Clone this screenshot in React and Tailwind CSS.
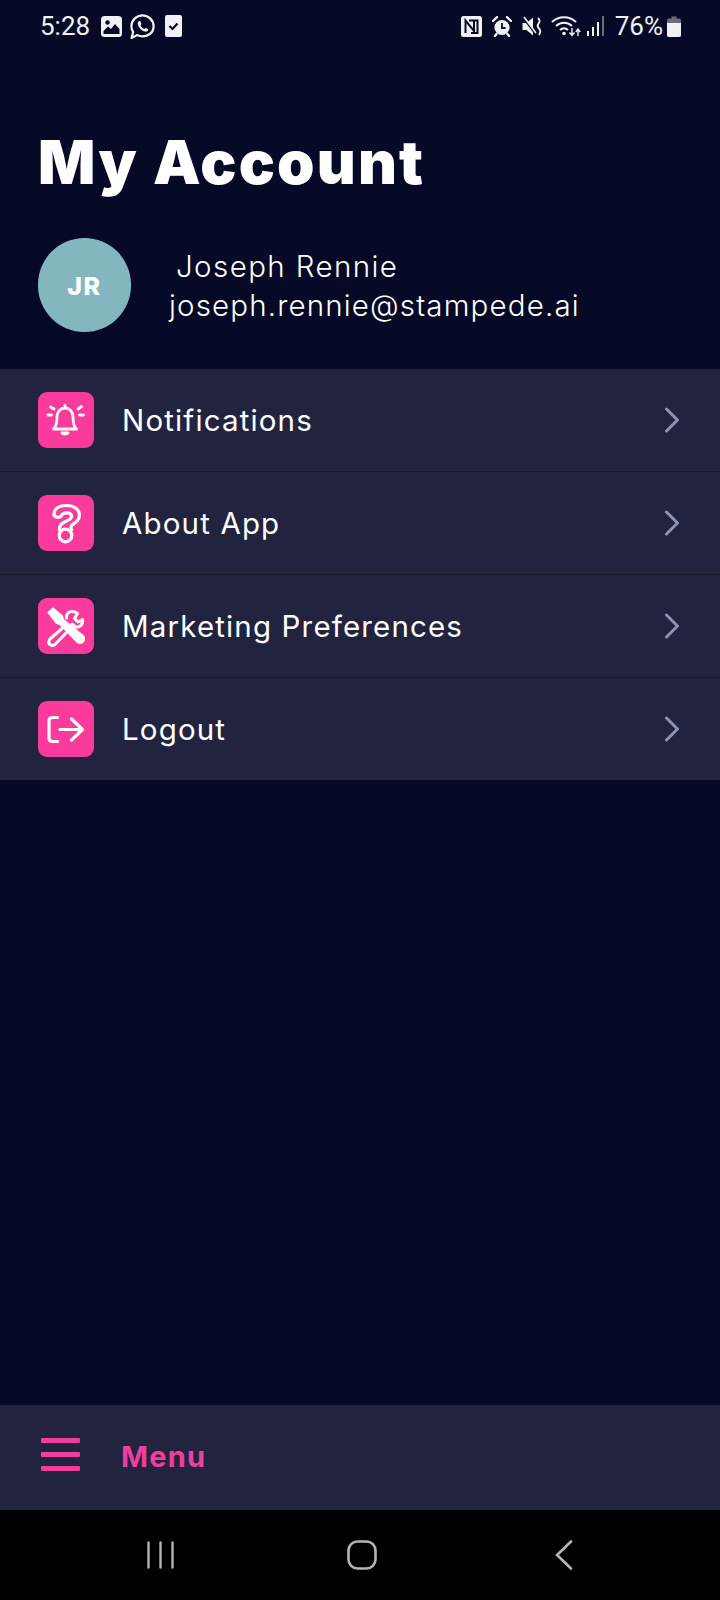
import React from 'react';

const BellIcon = () => (
  <svg width="56" height="56" viewBox="0 0 56 56" fill="none" stroke="white" strokeWidth="2.8" strokeLinecap="round" strokeLinejoin="round">
    <path d="M15.5 37 C18.5 34.5 19 31 19 25 C19 19.5 22.5 16 27 16 C31.5 16 35 19.5 35 25 C35 31 35.5 34.5 38.5 37 Z" />
    <path d="M27 13.5 V16" />
    <path d="M24 41 C25 42.5 29 42.5 30 41 Z" fill="white" />
    <path d="M12.5 15 L16 17" />
    <path d="M10 23 H13.5" />
    <path d="M43.5 14.5 L40 17" />
    <path d="M45.5 23 H41.5" />
  </svg>
);

const QuestionIcon = () => (
  <svg width="56" height="56" viewBox="0 0 56 56" fill="none" stroke="white" strokeWidth="3.2" strokeLinecap="round" strokeLinejoin="round">
    <path d="M16 19.5 C16 13 22 10.5 28.5 10.5 C36.5 10.5 41.5 14.5 41.5 20 C41.5 26 36.5 28 34 30 C33 31 33 33 33.5 35" />
    <path d="M21.5 35 C21 29.5 25 27.5 29.5 25.5 C33 24 34 22.5 33.5 20.5 C32.5 17 25 17 23.5 20.5 C22.5 23 16.5 23 16 19.5" />
    <circle cx="27.5" cy="40.5" r="6.3" />
  </svg>
);

const ToolsIcon = () => (
  <svg width="56" height="56" viewBox="0 0 56 56" fill="none" stroke="white" strokeLinecap="round" strokeLinejoin="round">
    <path d="M10.5 14.5 L15 10.5 L24 18 L25 21.5 L44.5 37.5 Q47.5 40.5 45 43.5 Q42 46.5 39 43.5 L22 26 L18.5 25 Z" fill="white" strokeWidth="2" />
    <path d="M34 26 L37.5 29 C41.5 29.5 45.5 26.5 44.5 21.5 L40 24 L36.5 20.5 L39.5 15.5 C34 11.5 28 13.5 28.5 20" strokeWidth="3" />
    <path d="M24 30.5 L12 41 Q9.5 44.5 12 46.5 Q15 48.5 17.5 46 L28 35" strokeWidth="3" />
  </svg>
);

const LogoutIcon = () => (
  <svg width="56" height="56" viewBox="0 0 56 56" fill="none" stroke="white" strokeWidth="3.2" strokeLinecap="round" strokeLinejoin="round">
    <path d="M19.5 16.5 H14.5 Q11 16.5 11 20 V37 Q11 40.5 14.5 40.5 H19.5" />
    <path d="M22 28.5 H44" />
    <path d="M33.5 18 L44.5 28.5 L33.5 39" />
  </svg>
);

const Chevron = () => (
  <svg width="16" height="26" viewBox="0 0 16 26" fill="none" stroke="#8e93b5" strokeWidth="3" strokeLinecap="round" strokeLinejoin="round">
    <path d="M2.5 2 L13.5 13 L2.5 24" />
  </svg>
);

const rows = [
  { label: 'Notifications', icon: <BellIcon /> },
  { label: 'About App', icon: <QuestionIcon /> },
  { label: 'Marketing Preferences', icon: <ToolsIcon /> },
  { label: 'Logout', icon: <LogoutIcon /> },
];

const StatusBar = () => (
  <div className="h-[52px] flex items-center justify-between pl-[40px] pr-[39px] text-[#f0f1f5] font-['Roboto',sans-serif]">
    <div className="flex items-center">
      <span className="text-[26px] leading-none w-[50px]">5:28</span>
      {/* gallery */}
      <svg className="ml-[11px]" width="21" height="21" viewBox="0 0 21 21">
        <rect width="21" height="21" rx="3.5" fill="#f0f1f5" />
        <circle cx="6.5" cy="6.5" r="2.2" fill="#060a26" />
        <path d="M2.5 18 V15 L7 10.5 L10 13 L14 8 L18.5 13 V18 Z" fill="#060a26" />
      </svg>
      {/* whatsapp */}
      <svg className="ml-[8px]" width="25" height="25" viewBox="0 0 25 25" fill="none">
        <path d="M1.5 24 L3.2 18 C2 16.2 1.4 14.4 1.4 12.4 C1.4 6.3 6.4 1.4 12.5 1.4 C18.6 1.4 23.6 6.3 23.6 12.4 C23.6 18.5 18.6 22.4 12.5 22.4 C10.6 22.4 8.9 22 7.3 21.1 Z" stroke="#f0f1f5" strokeWidth="2.2" strokeLinejoin="round" />
        <path d="M9 7 C7.5 8 7.3 10 8.5 12.2 C10 15 13 17.5 16 17.6 C17.5 17.5 18.4 16.4 18.3 15.2 L15.6 13.8 L14.4 15 C12.8 14.4 11.2 12.8 10.5 11.2 L11.6 10 L10.4 7.2 Z" fill="#f0f1f5" />
      </svg>
      {/* todo */}
      <svg className="ml-[10px]" width="17" height="22" viewBox="0 0 17 22">
        <rect width="17" height="22" rx="2" fill="#f0f1f5" />
        <path d="M4.5 11 L7.5 14 L12.5 8.5" fill="none" stroke="#060a26" strokeWidth="2.2" />
      </svg>
    </div>
    <div className="flex items-center">
      {/* nfc */}
      <svg width="21" height="21" viewBox="0 0 21 21">
        <rect width="21" height="21" rx="2.5" fill="#f0f1f5" />
        <path d="M4.5 17 V4.5 L13 15 V5 M8 4.5 H16.5 V17 H10" fill="none" stroke="#060a26" strokeWidth="2" />
      </svg>
      {/* alarm */}
      <svg className="ml-[10px]" width="20" height="21" viewBox="0 0 20 21">
        <circle cx="10" cy="11.5" r="7.6" fill="#f0f1f5" />
        <path d="M10 7 V12 H13.5" fill="none" stroke="#060a26" strokeWidth="1.8" />
        <path d="M1 5 L5 1.2 M19 5 L15 1.2 M4.5 18 L3 20 M15.5 18 L17 20" stroke="#f0f1f5" strokeWidth="2.4" strokeLinecap="round" />
      </svg>
      {/* muted */}
      <svg className="ml-[10px]" width="21" height="21" viewBox="0 0 21 21">
        <path d="M0.5 7 H4.5 L11 1.5 V19.5 L4.5 14 H0.5 Z" fill="#f0f1f5" />
        <path d="M1 1.5 L13.5 18" stroke="#060a26" strokeWidth="2" />
        <path d="M2 1 L14 17" stroke="#f0f1f5" strokeWidth="1.5" />
        <path d="M16 2 Q19 5 16.5 7.5 Q14.5 10 17 12.5 Q19.5 15 17 19" fill="none" stroke="#f0f1f5" strokeWidth="1.8" />
      </svg>
      {/* wifi */}
      <svg className="ml-[8px]" width="30" height="22" viewBox="0 0 30 22" fill="none">
        <path d="M1 7 C7.5 0.5 18.5 0.5 25 7" stroke="#f0f1f5" strokeWidth="2" />
        <path d="M5 11 C9.5 6.5 16.5 6.5 21 11" stroke="#f0f1f5" strokeWidth="2" />
        <path d="M9 15 C11.5 12.5 14.5 12.5 17 15" stroke="#f0f1f5" strokeWidth="2" />
        <circle cx="13" cy="18.5" r="1.8" fill="#f0f1f5" />
        <path d="M21 13 V20 M18.5 17.5 L21 20.5 L23.5 17.5" stroke="#f0f1f5" strokeWidth="1.4" />
        <path d="M27 21 V14.5 M24.8 17 L27 14 L29.2 17" stroke="#f0f1f5" strokeWidth="1.4" />
      </svg>
      {/* signal */}
      <svg className="ml-[6px]" width="18" height="22" viewBox="0 0 18 22">
        <rect x="0" y="16" width="2" height="5" fill="#f0f1f5" />
        <rect x="5" y="12" width="2" height="9" fill="#f0f1f5" />
        <rect x="10" y="7" width="2" height="14" fill="#f0f1f5" />
        <rect x="15" y="1" width="2" height="20" fill="#6a6c80" />
      </svg>
      <span className="ml-[10px] text-[26px] leading-none">76%</span>
      {/* battery */}
      <svg className="ml-[4px]" width="14" height="21" viewBox="0 0 14 21">
        <path d="M4.5 0.5 H9.5 V2.5 H12 Q14 2.5 14 4.5 V19 Q14 21 12 21 H2 Q0 21 0 19 V4.5 Q0 2.5 2 2.5 H4.5 Z" fill="#6a6c80" />
        <path d="M0 7 H14 V19 Q14 21 12 21 H2 Q0 21 0 19 Z" fill="#f0f1f5" />
      </svg>
    </div>
  </div>
);

const App = () => {
  return (
    <div className="h-[1600px] w-[720px] flex flex-col bg-[#060a26] text-white font-['Inter',sans-serif] overflow-hidden">
      <StatusBar />

      {/* Header */}
      <div className="px-[38px] pt-[74px]">
        <h1 className="text-[60px] leading-[72px] font-black tracking-[2.2px]">My Account</h1>
        <div className="mt-[40px] flex items-center h-[94px]">
          <div className="w-[93px] h-[94px] rounded-full bg-[#84b6c0] flex items-center justify-center pt-[4px] text-[25px] font-extrabold tracking-[1.5px]">
            JR
          </div>
          <div className="ml-[38px] pt-[1px] text-[29.5px] leading-[39px] font-light tracking-[1.15px]">
            <div className="pl-[7px] tracking-[1.4px]">Joseph Rennie</div>
            <div>joseph.rennie@stampede.ai</div>
          </div>
        </div>
      </div>

      {/* Rows */}
      <div className="mt-[37px]">
        {rows.map((r, i) => (
          <div key={i} className="h-[103px] last:h-[102px] bg-[#22243f] border-b border-[#191a22] last:border-b-0 flex items-center pl-[38px] pr-[40px]">
            <div className="w-[56px] h-[56px] rounded-[9px] bg-[#fb3b9b] shrink-0">{r.icon}</div>
            <span className="ml-[28px] flex-1 pt-[1px] text-[29.5px] font-normal tracking-[1.15px]">{r.label}</span>
            <Chevron />
          </div>
        ))}
      </div>

      <div className="flex-1" />

      {/* Bottom menu */}
      <div className="h-[105px] bg-[#22243f] flex items-center pl-[41px] shrink-0">
        <div className="w-[39px] mb-[6px] flex flex-col gap-[9px]">
          <div className="h-[5px] bg-[#f13d9c] rounded-[1px]"></div>
          <div className="h-[5px] bg-[#f13d9c] rounded-[1px]"></div>
          <div className="h-[5px] bg-[#f13d9c] rounded-[1px]"></div>
        </div>
        <span className="ml-[41px] mb-[2px] text-[29px] font-bold tracking-[1.2px] text-[#f13d9c]">Menu</span>
      </div>

      {/* Android nav bar */}
      <div className="h-[90px] bg-black flex items-center shrink-0 pl-[147px]">
        <svg width="27" height="28" viewBox="0 0 27 28" stroke="#b5b5b5" strokeWidth="2.4" strokeLinecap="round">
          <path d="M1.5 1.5 V26.5 M13.5 1.5 V26.5 M25.5 1.5 V26.5" />
        </svg>
        <svg className="ml-[173px]" width="30" height="30" viewBox="0 0 30 30" fill="none" stroke="#b5b5b5" strokeWidth="2.6">
          <rect x="1.5" y="1.5" width="27" height="27" rx="9" />
        </svg>
        <svg className="ml-[178px]" width="18" height="30" viewBox="0 0 18 30" fill="none" stroke="#b5b5b5" strokeWidth="2.6" strokeLinecap="round">
          <path d="M16 1.5 L2 15 L16 28.5" />
        </svg>
      </div>
    </div>
  );
};

export default App;
